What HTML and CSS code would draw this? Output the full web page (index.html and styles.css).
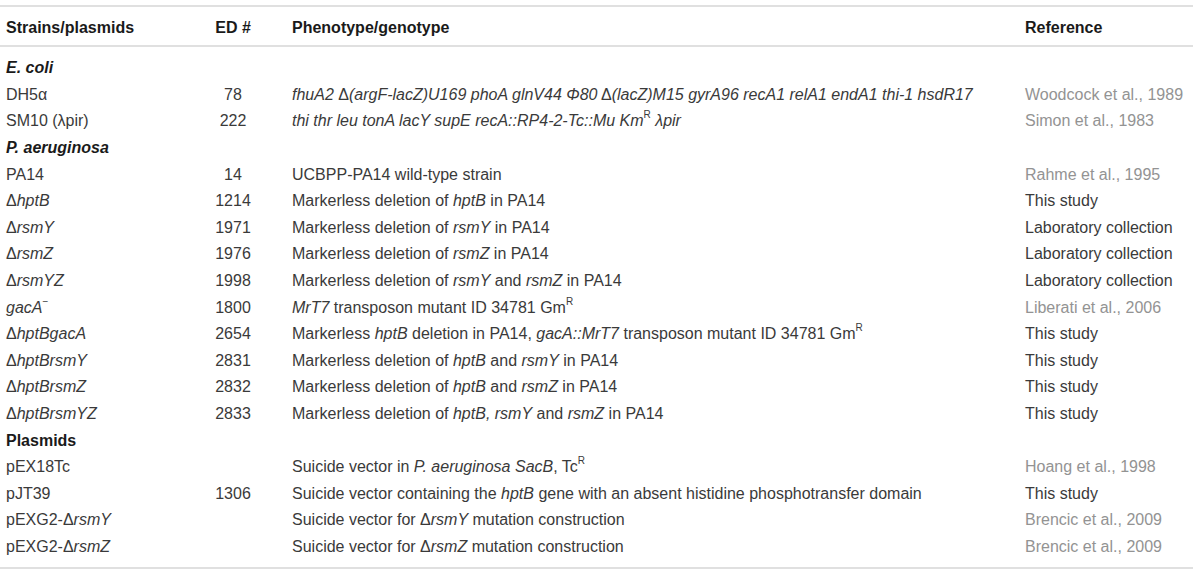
FILE: index.html
```html
<!DOCTYPE html>
<html lang="en">
<head>
<meta charset="utf-8">
<title>Strains and plasmids</title>
<link rel="stylesheet" href="styles.css">
</head>
<body>
<table class="strains">
  <colgroup>
    <col class="c-name">
    <col class="c-ed">
    <col class="c-pheno">
    <col class="c-ref">
  </colgroup>
  <thead>
    <tr>
      <th class="name">Strains/plasmids</th>
      <th class="ed">ED #</th>
      <th class="pheno">Phenotype/genotype</th>
      <th class="ref">Reference</th>
    </tr>
  </thead>
  <tbody>
    <tr class="group first"><td colspan="4"><i>E. coli</i></td></tr>
    <tr>
      <td class="name">DH5α</td>
      <td class="ed">78</td>
      <td class="pheno"><i>fhuA2</i> Δ<i>(argF-lacZ)U169 phoA glnV44 Φ80</i> Δ<i>(lacZ)M15 gyrA96 recA1 relA1 endA1 thi-1 hsdR17</i></td>
      <td class="ref cite">Woodcock et al., 1989</td>
    </tr>
    <tr>
      <td class="name">SM10 (λpir)</td>
      <td class="ed">222</td>
      <td class="pheno"><i>thi thr leu tonA lacY supE recA::RP4-2-Tc::Mu Km</i><sup>R</sup> <i>λpir</i></td>
      <td class="ref cite">Simon et al., 1983</td>
    </tr>
    <tr class="group"><td colspan="4"><i>P. aeruginosa</i></td></tr>
    <tr>
      <td class="name">PA14</td>
      <td class="ed">14</td>
      <td class="pheno">UCBPP-PA14 wild-type strain</td>
      <td class="ref cite">Rahme et al., 1995</td>
    </tr>
    <tr>
      <td class="name">Δ<i>hptB</i></td>
      <td class="ed">1214</td>
      <td class="pheno">Markerless deletion of <i>hptB</i> in PA14</td>
      <td class="ref">This study</td>
    </tr>
    <tr>
      <td class="name">Δ<i>rsmY</i></td>
      <td class="ed">1971</td>
      <td class="pheno">Markerless deletion of <i>rsmY</i> in PA14</td>
      <td class="ref">Laboratory collection</td>
    </tr>
    <tr>
      <td class="name">Δ<i>rsmZ</i></td>
      <td class="ed">1976</td>
      <td class="pheno">Markerless deletion of <i>rsmZ</i> in PA14</td>
      <td class="ref">Laboratory collection</td>
    </tr>
    <tr>
      <td class="name">Δ<i>rsmYZ</i></td>
      <td class="ed">1998</td>
      <td class="pheno">Markerless deletion of <i>rsmY</i> and <i>rsmZ</i> in PA14</td>
      <td class="ref">Laboratory collection</td>
    </tr>
    <tr>
      <td class="name"><i>gacA</i><sup>−</sup></td>
      <td class="ed">1800</td>
      <td class="pheno"><i>MrT7</i> transposon mutant ID 34781 Gm<sup>R</sup></td>
      <td class="ref cite">Liberati et al., 2006</td>
    </tr>
    <tr>
      <td class="name">Δ<i>hptBgacA</i></td>
      <td class="ed">2654</td>
      <td class="pheno">Markerless <i>hptB</i> deletion in PA14, <i>gacA::MrT7</i> transposon mutant ID 34781 Gm<sup>R</sup></td>
      <td class="ref">This study</td>
    </tr>
    <tr>
      <td class="name">Δ<i>hptBrsmY</i></td>
      <td class="ed">2831</td>
      <td class="pheno">Markerless deletion of <i>hptB</i> and <i>rsmY</i> in PA14</td>
      <td class="ref">This study</td>
    </tr>
    <tr>
      <td class="name">Δ<i>hptBrsmZ</i></td>
      <td class="ed">2832</td>
      <td class="pheno">Markerless deletion of <i>hptB</i> and <i>rsmZ</i> in PA14</td>
      <td class="ref">This study</td>
    </tr>
    <tr>
      <td class="name">Δ<i>hptBrsmYZ</i></td>
      <td class="ed">2833</td>
      <td class="pheno">Markerless deletion of <i>hptB, rsmY</i> and <i>rsmZ</i> in PA14</td>
      <td class="ref">This study</td>
    </tr>
    <tr class="group plain"><td colspan="4">Plasmids</td></tr>
    <tr>
      <td class="name">pEX18Tc</td>
      <td class="ed"></td>
      <td class="pheno">Suicide vector in <i>P. aeruginosa SacB</i>, Tc<sup>R</sup></td>
      <td class="ref cite">Hoang et al., 1998</td>
    </tr>
    <tr>
      <td class="name">pJT39</td>
      <td class="ed">1306</td>
      <td class="pheno">Suicide vector containing the <i>hptB</i> gene with an absent histidine phosphotransfer domain</td>
      <td class="ref">This study</td>
    </tr>
    <tr>
      <td class="name">pEXG2-Δ<i>rsmY</i></td>
      <td class="ed"></td>
      <td class="pheno">Suicide vector for Δ<i>rsmY</i> mutation construction</td>
      <td class="ref cite">Brencic et al., 2009</td>
    </tr>
    <tr class="last">
      <td class="name">pEXG2-Δ<i>rsmZ</i></td>
      <td class="ed"></td>
      <td class="pheno">Suicide vector for Δ<i>rsmZ</i> mutation construction</td>
      <td class="ref cite">Brencic et al., 2009</td>
    </tr>
  </tbody>
</table>
</body>
</html>
```

FILE: styles.css
```css
html, body {
  margin: 0;
  padding: 0;
  background: #ffffff;
}

body {
  padding-top: 5px;
  font-family: "Liberation Sans", Arial, sans-serif;
  font-size: 16px;
  color: #3a3a3a;
}

.strains {
  width: 1193px;
  border-collapse: collapse;
  table-layout: fixed;
}

.c-name { width: 206px; }
.c-ed { width: 54px; }
.c-pheno { width: 759px; }
.c-ref { width: 174px; }

.strains thead tr {
  border-top: 2px solid #e0e0e0;
  border-bottom: 2px solid #e0e0e0;
}

.strains tbody tr.last {
  border-bottom: 2px solid #e0e0e0;
}

.strains th {
  height: 35px;
  padding: 3px 0 0 0;
  font-weight: bold;
  color: #1a1a1a;
  text-align: left;
  white-space: nowrap;
}

.strains td {
  height: 26.6px;
  padding: 0;
  white-space: nowrap;
  vertical-align: middle;
}

.strains .name { padding-left: 6px; }
.strains .ed { text-align: center; }
.strains .pheno { padding-left: 32px; }
.strains .ref { padding-left: 6px; }

.strains td.cite { color: #939393; }

.strains tr.group td {
  padding-left: 6px;
  font-weight: bold;
  color: #1a1a1a;
}

.strains tr.first td {
  padding-top: 8px;
}

.strains tr.last td {
  padding-bottom: 7px;
}

sup {
  font-size: 10px;
  vertical-align: top;
  position: relative;
  top: -3px;
}
```
